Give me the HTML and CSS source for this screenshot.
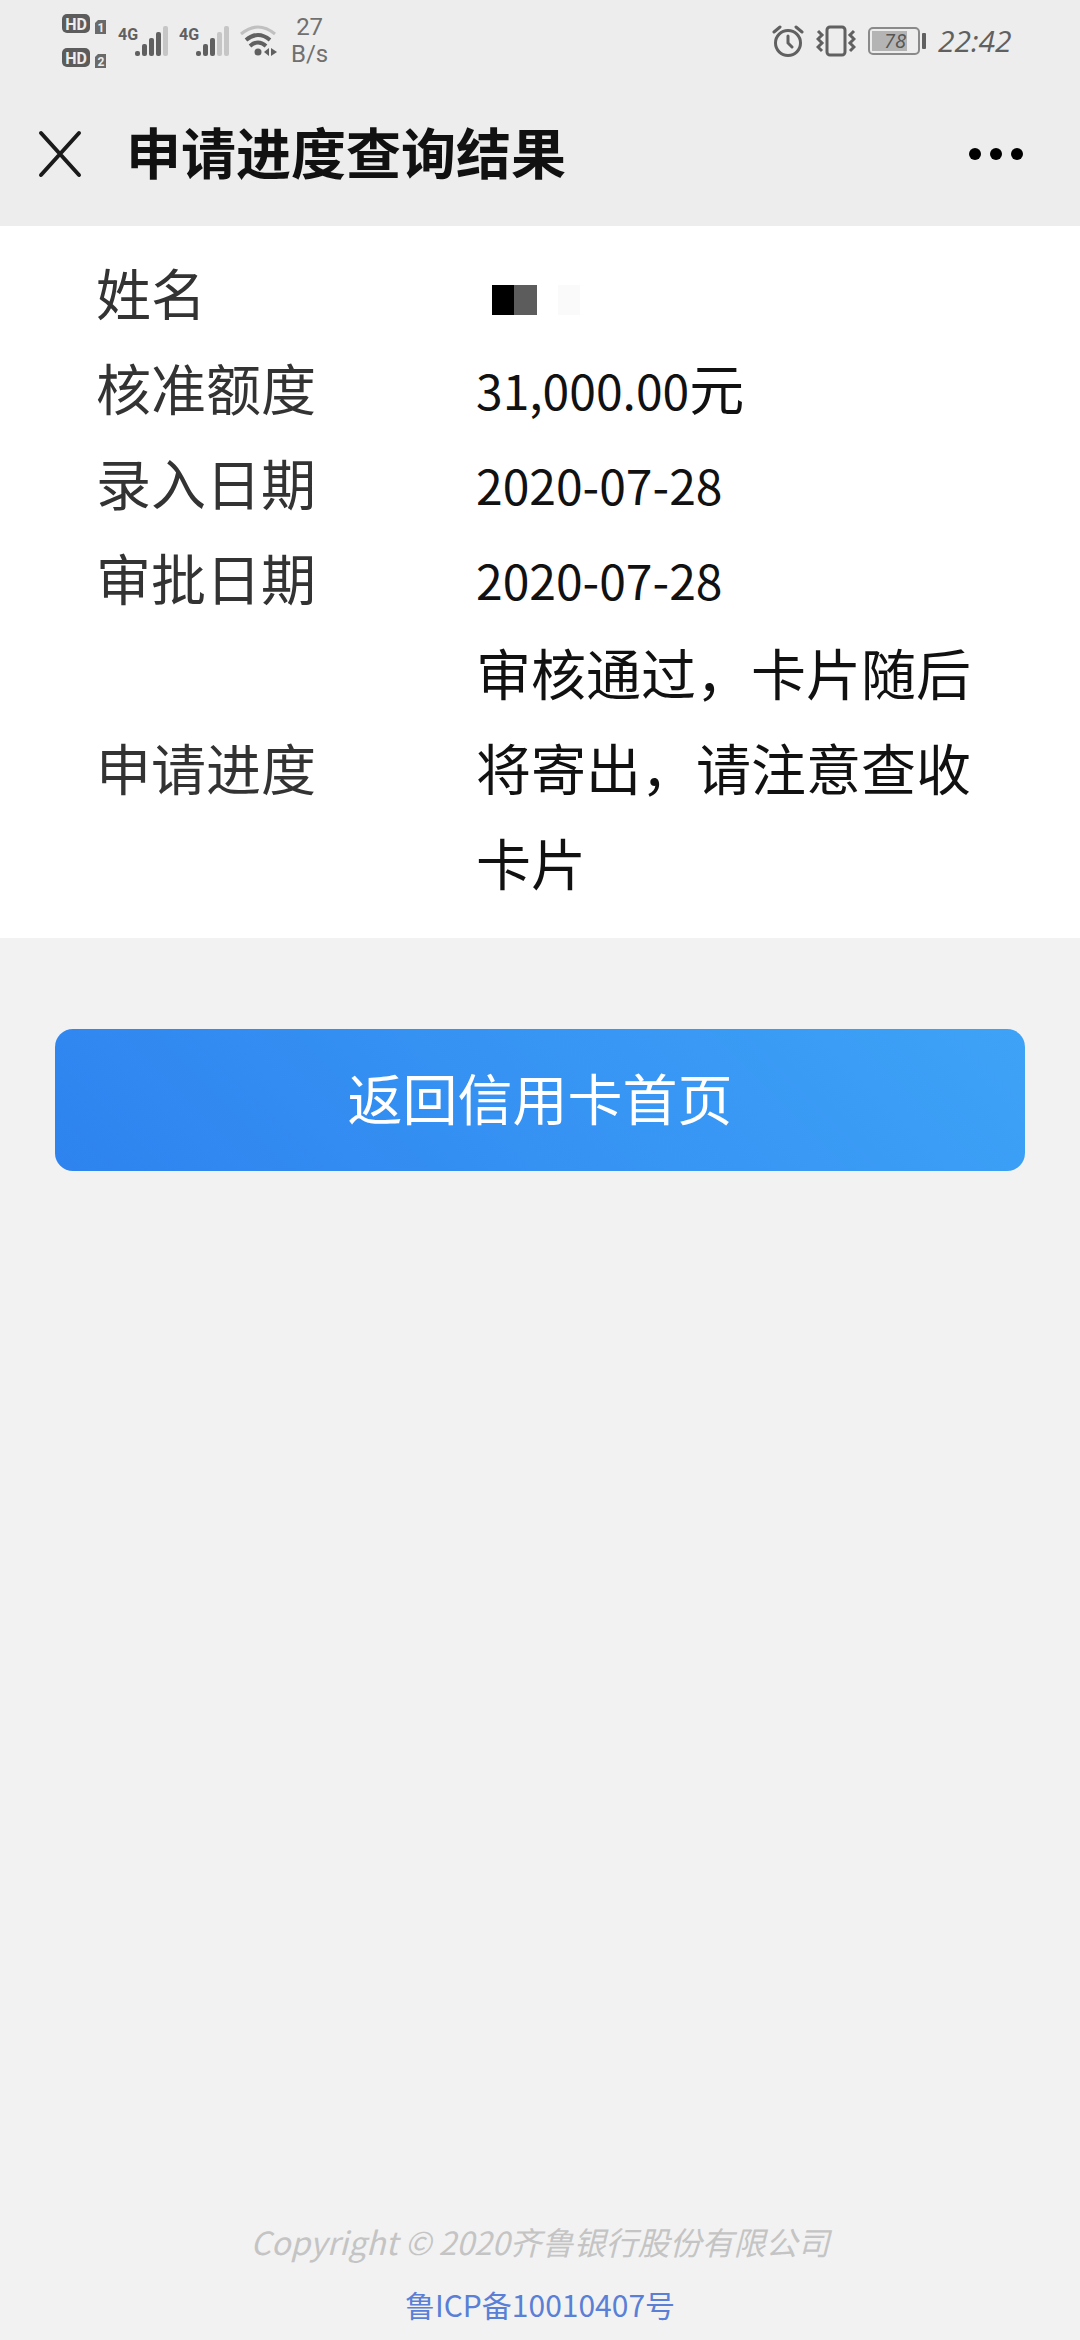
FILE: index.html
```
<!DOCTYPE html>
<html lang="zh-CN">
<head>
    <meta charset="UTF-8">
    <meta name="viewport" content="width=device-width, initial-scale=1.0">
    <title>申请进度查询结果</title>
    <link rel="stylesheet" href="styles.css">
</head>
<body>
    <header class="header">
        <div class="status-bar">
            <div class="status-left">
                <!-- HD 1 / HD 2 -->
                <svg class="icon-hd" width="48" height="56" viewBox="0 0 48 56">
                    <rect x="1" y="1" width="28" height="19" rx="5" fill="#5c5c5c"/>
                    <text x="15" y="17" class="hd-text">HD</text>
                    <path d="M34 10l3-3h8v14H34z" fill="#6a6a6a"/>
                    <text x="40" y="19" class="sim-text">1</text>
                    <rect x="1" y="35" width="28" height="19" rx="5" fill="#5c5c5c"/>
                    <text x="15" y="51" class="hd-text">HD</text>
                    <path d="M34 44l3-3h8v14H34z" fill="#6a6a6a"/>
                    <text x="40" y="53" class="sim-text">2</text>
                </svg>
                <svg width="52" height="34" viewBox="0 0 52 34">
                    <text x="0" y="16" class="net-text">4G</text>
                    <g fill="#606060">
                        <rect x="17" y="27" width="5" height="5" rx="2"/>
                        <rect x="24" y="20" width="5" height="12" rx="2"/>
                        <rect x="31" y="14" width="5" height="18" rx="2"/>
                        <rect x="38" y="8" width="5" height="24" rx="2"/>
                    </g>
                    <rect x="45" y="2" width="5" height="30" rx="2" fill="#c6c6c6"/>
                </svg>
                <svg width="52" height="34" viewBox="0 0 52 34">
                    <text x="0" y="16" class="net-text">4G</text>
                    <g fill="#606060">
                        <rect x="17" y="27" width="5" height="5" rx="2"/>
                        <rect x="24" y="20" width="5" height="12" rx="2"/>
                        <rect x="31" y="14" width="5" height="18" rx="2"/>
                    </g>
                    <rect x="38" y="8" width="5" height="24" rx="2" fill="#c6c6c6"/>
                    <rect x="45" y="2" width="5" height="30" rx="2" fill="#c6c6c6"/>
                </svg>
                <svg width="38" height="32" viewBox="0 0 38 32" fill="none" stroke-width="4">
                    <path d="M1 9Q18-5 35 9" stroke="#c0c0c0" stroke-width="3"/>
                    <path d="M6 15Q18 5 30 15" stroke="#606060"/>
                    <path d="M10 21Q18 14 26 21" stroke="#606060"/>
                    <circle cx="18" cy="27" r="3.5" fill="#606060"/>
                    <path d="M29 23v8l-5-4zM31 23v8l6-4z" fill="#606060"/>
                </svg>
                <div class="net-speed">27<br>B/s</div>
            </div>
            <div class="status-right">
                <svg width="32" height="32" viewBox="0 0 32 32" fill="none" stroke="#606060" stroke-width="3" stroke-linecap="round">
                    <circle cx="16" cy="18" r="12.5"/>
                    <path d="M16 11v7l4 4M2 7l6-5M30 7l-6-5"/>
                </svg>
                <svg width="40" height="32" viewBox="0 0 40 32" fill="none" stroke="#606060" stroke-width="3">
                    <rect x="11" y="2" width="18" height="28" rx="3"/>
                    <path d="M2 6l4 4-4 4 4 4-4 4 4 4M38 6l-4 4 4 4-4 4 4 4-4 4"/>
                </svg>
                <svg width="58" height="28" viewBox="0 0 58 28">
                    <rect x="1" y="1" width="50" height="26" rx="4" fill="none" stroke="#8a8a8a" stroke-width="2"/>
                    <rect x="4" y="4" width="35" height="20" fill="#b4b4b4"/>
                    <rect x="54" y="6" width="4" height="16" rx="1" fill="#606060"/>
                    <text x="27" y="21" class="battery-text">78</text>
                </svg>
                <span class="clock">22:42</span>
            </div>
        </div>
        <nav class="nav-bar">
            <button class="nav-button" aria-label="关闭">
                <svg width="44" height="50" viewBox="0 0 44 50" stroke="#1a1a1a" stroke-width="4" stroke-linecap="round">
                    <path d="M3 4l38 42M41 4L3 46"/>
                </svg>
            </button>
            <h1 class="title">申请进度查询结果</h1>
            <button class="nav-button" aria-label="更多">
                <svg width="56" height="14" viewBox="0 0 56 14">
                    <circle cx="7" cy="7" r="6"/>
                    <circle cx="28" cy="7" r="6"/>
                    <circle cx="49" cy="7" r="6"/>
                </svg>
            </button>
        </nav>
    </header>

    <main class="content">
        <dl class="result">
            <dt>姓名</dt>
            <dd>
                <svg class="mosaic" width="90" height="30" viewBox="0 0 90 30">
                    <rect x="0" y="0" width="22" height="30" fill="#000"/>
                    <rect x="22" y="0" width="23" height="30" fill="#5c5c5c"/>
                    <rect x="66" y="0" width="22" height="30" fill="#fafafa"/>
                </svg>
            </dd>
            <dt>核准额度</dt>
            <dd><span class="num">31,000.00</span>元</dd>
            <dt>录入日期</dt>
            <dd><span class="num">2020-07-28</span></dd>
            <dt>审批日期</dt>
            <dd><span class="num">2020-07-28</span></dd>
            <dt>申请进度</dt>
            <dd>审核通过，卡片随后将寄出，请注意查收卡片</dd>
        </dl>
        <button class="home-button">返回信用卡首页</button>
    </main>

    <footer class="footer">
        <p class="copyright">Copyright © 2020齐鲁银行股份有限公司</p>
        <a class="icp" href="#">鲁ICP备10010407号</a>
    </footer>
</body>
</html>
```
FILE: styles.css
```
* {
    margin: 0;
    padding: 0;
    box-sizing: border-box;
}

body {
    min-height: 100vh;
    display: flex;
    flex-direction: column;
    background: #f2f2f2;
    color: #111;
    font-family: "Noto Sans CJK SC", sans-serif;
    font-size: 55px;
}

button {
    border: none;
    background: none;
    font-family: inherit;
    cursor: pointer;
}

svg {
    display: block;
}

.header {
    background: #ededed;
}

.status-bar {
    display: flex;
    justify-content: space-between;
    height: 82px;
    padding: 0 64px 0 61px;
}

.status-left,
.status-right {
    display: flex;
    align-items: center;
    gap: 9px;
}

.status-right {
    gap: 12px;
}

.icon-hd {
    flex: none;
}

.hd-text {
    font: bold 16px Roboto, sans-serif;
    fill: #ededed;
    text-anchor: middle;
}

.sim-text {
    font: bold 12px Roboto, sans-serif;
    fill: #ededed;
    text-anchor: middle;
}

.net-text {
    font: bold 16px Roboto, sans-serif;
    fill: #606060;
}

.battery-text {
    font: italic 20px "Open Sans", sans-serif;
    fill: #555;
    text-anchor: middle;
}

.net-speed {
    margin-left: 4px;
    font-family: Roboto, sans-serif;
    font-size: 24px;
    line-height: 27px;
    text-align: center;
    color: #707070;
}

.clock {
    min-width: 78px;
    font-family: "Open Sans", sans-serif;
    font-size: 30px;
    font-style: italic;
    line-height: 32px;
    color: #606060;
}

.nav-bar {
    display: flex;
    align-items: center;
    height: 144px;
    padding: 0 56px 0 38px;
}

.nav-button {
    flex: none;
}

.title {
    flex: 1;
    margin-left: 44px;
    padding-bottom: 8px;
    font-size: 55px;
    font-weight: bold;
}

.result {
    display: grid;
    grid-template-columns: 380px 1fr;
    align-items: center;
    padding: 18px 96px 29px;
    background: #fff;
    line-height: 95px;
}

.result dt {
    color: #333;
}

.num {
    font-size: 48px;
    line-height: 48px;
}

.mosaic {
    margin: 16px 0 0 16px;
}

.home-button {
    display: block;
    width: calc(100% - 110px);
    height: 142px;
    margin: 91px auto 0;
    padding-bottom: 8px;
    border-radius: 18px;
    background: linear-gradient(45deg, #2e83ef, #3ea3f7);
    color: #fff;
    font-size: 55px;
}

.footer {
    margin-top: auto;
    padding-bottom: 4px;
    font-size: 32px;
    line-height: 63px;
    text-align: center;
}

.copyright {
    font-style: italic;
    color: #c4c4c4;
}

.icp {
    display: block;
    color: #5a7fd6;
    font-size: 30px;
    text-decoration: none;
}
```
